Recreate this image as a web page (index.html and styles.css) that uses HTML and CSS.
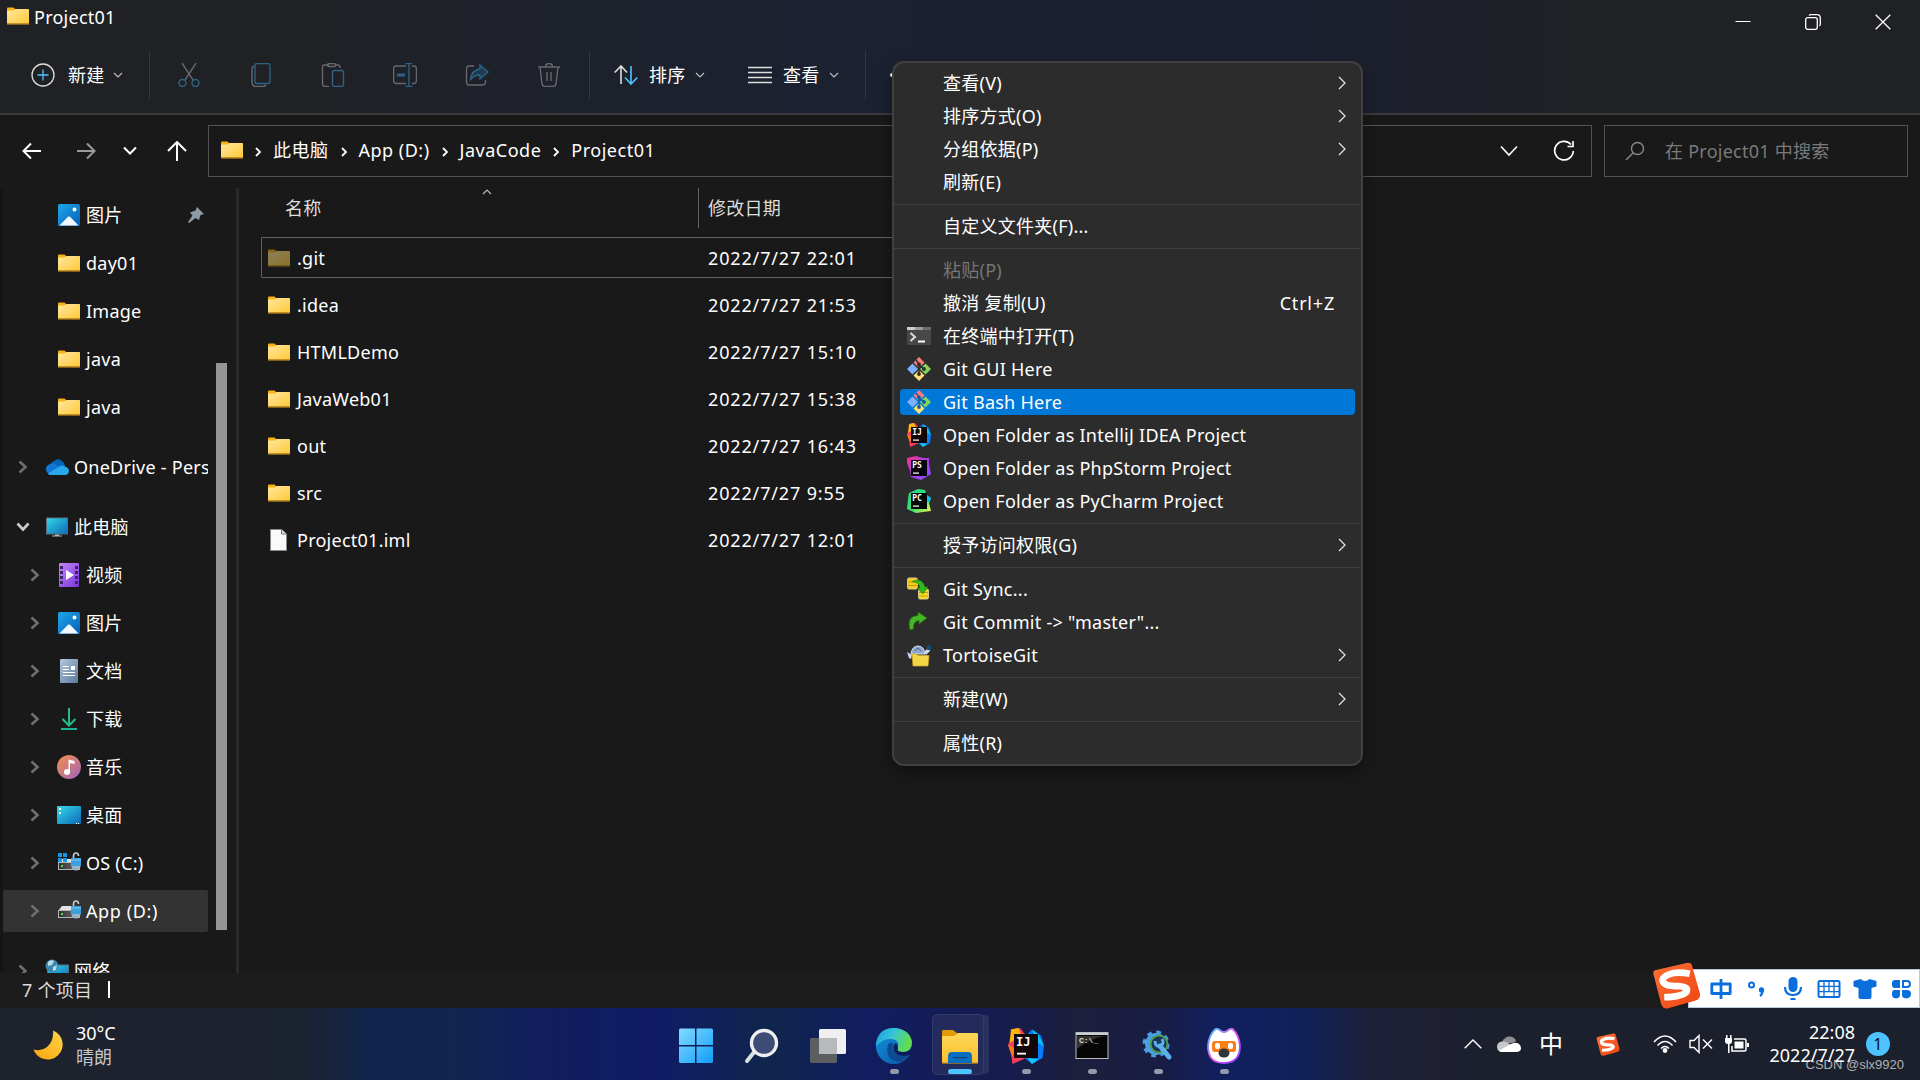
FILE: index.html
```html
<!DOCTYPE html>
<html lang="zh-CN">
<head>
  <meta charset="UTF-8">
  <meta name="viewport" content="width=device-width, initial-scale=1.0">
  <title>Project01</title>
  <link rel="stylesheet" href="styles.css">
</head>
<body>

<!-- shared icons -->
<svg class="defs" width="0" height="0">
  <defs>
    <linearGradient id="gFolder" x1="0" y1="0" x2="1" y2="1"><stop offset="0" stop-color="#ffe8a0"/><stop offset="1" stop-color="#ffc937"/></linearGradient>
    <linearGradient id="gBlue" x1="0" y1="0" x2="1" y2="1"><stop offset="0" stop-color="#1fa7ea"/><stop offset="1" stop-color="#0560b5"/></linearGradient>
    <linearGradient id="gCyan" x1="0" y1="0" x2="1" y2="1"><stop offset="0" stop-color="#35d9e8"/><stop offset="1" stop-color="#0c67b8"/></linearGradient>
    <linearGradient id="gViolet" x1="0" y1="0" x2="1" y2="1"><stop offset="0" stop-color="#c487fa"/><stop offset="1" stop-color="#7b35d8"/></linearGradient>
    <linearGradient id="gDoc" x1="0" y1="0" x2="1" y2="1"><stop offset="0" stop-color="#b5c8dc"/><stop offset="1" stop-color="#587a9e"/></linearGradient>
    <linearGradient id="gMusic" x1="0" y1="0" x2="1" y2="1"><stop offset="0" stop-color="#f99048"/><stop offset="1" stop-color="#9d62c0"/></linearGradient>
    <linearGradient id="gDrive" x1="0" y1="0" x2="1" y2="0"><stop offset="0" stop-color="#2e2e2e"/><stop offset="1" stop-color="#777"/></linearGradient>
    <linearGradient id="gWin" x1="0" y1="0" x2="1" y2="1"><stop offset="0" stop-color="#82dcff"/><stop offset="1" stop-color="#129cf8"/></linearGradient>
    <linearGradient id="gEdge" x1="0" y1="0" x2="1" y2="0.3"><stop offset="0" stop-color="#1b9de0"/><stop offset="0.5" stop-color="#36c4d8"/><stop offset="1" stop-color="#62dc50"/></linearGradient>
    <linearGradient id="gEdge2" x1="0" y1="0" x2="1" y2="1"><stop offset="0" stop-color="#1492dc"/><stop offset="1" stop-color="#0a57a8"/></linearGradient>
    <linearGradient id="gTask" x1="0" y1="0" x2="0" y2="1"><stop offset="0" stop-color="#ffd75a"/><stop offset="1" stop-color="#fdbf2d"/></linearGradient>
    <linearGradient id="gMoon" x1="1" y1="0" x2="0" y2="1"><stop offset="0" stop-color="#ffd54a"/><stop offset="1" stop-color="#fba30a"/></linearGradient>
    <linearGradient id="gSogou" x1="0" y1="0" x2="1" y2="1"><stop offset="0" stop-color="#ff7038"/><stop offset="1" stop-color="#ee4410"/></linearGradient>
    <linearGradient id="gPs" x1="0" y1="0" x2="1" y2="1"><stop offset="0" stop-color="#fc3181"/><stop offset="0.5" stop-color="#a83df0"/><stop offset="1" stop-color="#8350ff"/></linearGradient>
    <linearGradient id="gPc" x1="0" y1="0" x2="1" y2="1"><stop offset="0" stop-color="#21d789"/><stop offset="0.55" stop-color="#3be070"/><stop offset="1" stop-color="#fcf84a"/></linearGradient>
    <linearGradient id="gDog" x1="0" y1="0" x2="1" y2="1"><stop offset="0" stop-color="#39c8ff"/><stop offset="0.5" stop-color="#f050e8"/><stop offset="1" stop-color="#7a40ff"/></linearGradient>
  </defs>

  <symbol id="folder" viewBox="0 0 22 18">
    <path d="M0 1.5Q0 0.5 1 0.5H6.5L8.5 2.5V5H0Z" fill="#fbb114"/>
    <path d="M0 3.6H6.8L8.5 2H21.4Q22 2 22 2.8V16.6H0Z" fill="url(#gFolder)"/>
    <path d="M0 16.4H22V17.5H0Z" fill="#e9a31c"/>
  </symbol>
  <symbol id="picture" viewBox="0 0 24 24">
    <rect x="1" y="1" width="22" height="22" rx="1.5" fill="url(#gBlue)"/>
    <path d="M2.5 22.5L11 13.8Q12 13 13 13.8L21.5 22.5Z" fill="#f4f9ff"/>
    <circle cx="17.5" cy="6.5" r="2" fill="#fff"/>
  </symbol>
  <symbol id="cloud" viewBox="0 0 24 24">
    <path d="M4 12Q6 7 9 6Q13 2.500 17 6Q20 8 20 12Z" fill="#0364b8"/>
    <path d="M5 19A5 5 0 0 1 4 9.500Q8 7 12 10.500L17 13L10 19Z" fill="#0f78d4"/>
    <path d="M3 18.500L14 12Q17 9.500 20 11.500Q24 13 24 16Q23.500 20 20 20H5Q3.500 20 3 18.500Z" fill="#28a8ea"/>
  </symbol>
  <symbol id="monitor" viewBox="0 0 24 24">
    <rect x="1.500" y="3" width="21" height="16" fill="url(#gCyan)" stroke="#55707c"/>
    <path d="M10 19.500H14V20.500H17V21.500H7V20.500H10Z" fill="#aeb9c0"/>
  </symbol>
  <symbol id="video" viewBox="0 0 24 24">
    <rect x="2" y="0" width="20" height="24" rx="1" fill="url(#gViolet)"/>
    <path d="M3 3h3v3H3zM3 8h3v3H3zM3 13h3v3H3zM3 18h3v3H3zM18 3h3v3h-3zM18 8h3v3h-3zM18 13h3v3h-3zM18 18h3v3h-3z" fill="#3c2468"/>
    <path d="M9 7L17 12L9 17Z" fill="#fff"/>
  </symbol>
  <symbol id="doc" viewBox="0 0 24 24">
    <rect x="3" y="0" width="18" height="24" rx="1" fill="url(#gDoc)"/>
    <path d="M6 7.500H12M6 10.500H12M6 13.500H18M6 16.500H18" stroke="#fff"/>
    <rect x="14" y="7" width="4" height="4" fill="#fff"/>
  </symbol>
  <symbol id="download" viewBox="0 0 24 24">
    <path d="M12 1V18M5.500 12L12 18.500L18.500 12" stroke="#25bf86" stroke-width="2" fill="none"/>
    <path d="M4 21H20V23H4Z" fill="#17b394"/>
  </symbol>
  <symbol id="music" viewBox="0 0 24 24">
    <circle cx="12" cy="12" r="12" fill="url(#gMusic)"/>
    <circle cx="10" cy="17" r="3" fill="#fff"/>
    <path d="M11.500 17V4.500L17.500 6V9L13 8V17Z" fill="#fff"/>
  </symbol>
  <symbol id="desktop" viewBox="0 0 24 24">
    <rect x="0" y="3" width="24" height="18" rx="1" fill="url(#gCyan)"/>
    <path d="M2 5h2v2H2zM2 9h2v2H2zM19 20h1v1h-1zM21 20h1v1h-1z" fill="#fff"/>
  </symbol>
  <symbol id="lock" viewBox="0 0 24 24">
    <path d="M16.500 8V5Q16.500 2 19 2Q21.500 2 21.500 5" stroke="#bfc8cf" stroke-width="1.700" fill="none"/>
    <circle cx="19" cy="15" r="4.500" fill="#9db4c4"/>
    <rect x="14" y="7" width="10" height="8" fill="#3ca0e0"/>
    <path d="M14 9H24" stroke="#7cc8f4"/>
  </symbol>
  <symbol id="drive" viewBox="0 0 24 24">
    <path d="M5 7H19L23 12H1Z" fill="#e3e3e3"/>
    <rect x="1.500" y="11.500" width="21" height="7" fill="url(#gDrive)" stroke="#b5b5b5"/>
    <rect x="4" y="14" width="2" height="2" fill="#3be63b"/>
    <use href="#lock"/>
  </symbol>
  <symbol id="osdrive" viewBox="0 0 24 24">
    <path d="M5 8H19L23 12H1Z" fill="#e3e3e3"/>
    <rect x="1.500" y="11.500" width="21" height="7" fill="url(#gDrive)" stroke="#b5b5b5"/>
    <path d="M1 2h4v4H1zM6 2h4v4H6zM1 7h4v4H1zM6 7h4v4H6z" fill="#1597e8"/>
    <rect x="4" y="14" width="2" height="2" fill="#3be63b"/>
    <use href="#lock"/>
  </symbol>
  <symbol id="network" viewBox="0 0 24 24">
    <rect x="2.500" y="6" width="21" height="14" fill="url(#gCyan)" stroke="#55707c"/>
    <circle cx="7" cy="7" r="6.500" fill="#3d86ae"/>
    <path d="M3 3Q6 0 9 2L7 6L3 7ZM8 8L12 6L11 11L8 12Z" fill="#b8dcec"/>
  </symbol>
  <symbol id="file" viewBox="0 0 24 24">
    <path d="M3.500 1.500H14.500L19.500 6V22.500H3.500Z" fill="#fafafa" stroke="#8a8a8a"/>
    <path d="M14.500 1.500V6H19.500" fill="#ddd" stroke="#777"/>
  </symbol>
  <symbol id="chev" viewBox="0 0 12 14"><path d="M2.500 1.500L8.500 7L2.500 12.500" fill="none" stroke="currentColor" stroke-width="2.600"/></symbol>
  <symbol id="caret" viewBox="0 0 10 6"><path d="M1 1L5 5L9 1" fill="none" stroke="currentColor" stroke-width="1.200"/></symbol>
  <symbol id="sub" viewBox="0 0 8 14"><path d="M1 1L7 7L1 13" fill="none" stroke="#e8e8e8" stroke-width="1.200"/></symbol>
  <symbol id="crumb" viewBox="0 0 8 10"><path d="M2 1L6 5L2 9" fill="none" stroke="#fff" stroke-width="1.800"/></symbol>
  <symbol id="git" viewBox="0 0 24 24">
    <path d="M12 0L17.500 5.500L12 11L6.500 5.500Z" fill="#ff7b7b"/>
    <path d="M18.500 6.500L24 12L18.500 17.500L13 12Z" fill="#86d65c"/>
    <path d="M5.500 6.500L11 12L5.500 17.500L0 12Z" fill="#7fb0fb"/>
    <path d="M12 13L17.500 18.500L12 24L6.500 18.500Z" fill="#ffe173"/>
    <path d="M9 3L12 7V17M12 8L17 12" stroke="currentColor" stroke-width="1.500" fill="none"/>
    <g fill="currentColor"><circle cx="12" cy="7.500" r="1.900"/><circle cx="12" cy="17" r="1.900"/><circle cx="17" cy="12" r="1.900"/></g>
  </symbol>
  <symbol id="idea" viewBox="0 0 24 24">
    <path d="M2 1L8 0L12 5V20L3 24L2 17L0 11L2 8Z" fill="#fc3a5c"/>
    <path d="M2 1L7 0L9 5L1 10Z" fill="#fdb60d"/>
    <path d="M0 11L5 14L3 19L2 17Z" fill="#f97a12"/>
    <path d="M10 5L13 4L16 1L22 5L24 12L23 20L16 24L10 19Z" fill="#087cfa"/>
    <path d="M16 1L20 4L24 12L20 10Z" fill="#07c3f2"/>
    <path d="M13 20L20 21L16 24Z" fill="#14c9ee"/>
    <rect x="4" y="4" width="16" height="16" fill="#120608"/>
    <rect x="6" y="16.500" width="6" height="1.200" fill="#fff"/>
  </symbol>
  <symbol id="phpstorm" viewBox="0 0 24 24">
    <path d="M0 2L9 0L16 2L22 2L22 8L24 18L19 21L14 24L4 21L3 15L0 7Z" fill="url(#gPs)"/>
    <rect x="4" y="4" width="16" height="16" fill="#08030c"/>
    <rect x="6" y="16.500" width="6" height="1.200" fill="#fff"/>
  </symbol>
  <symbol id="pycharm" viewBox="0 0 24 24">
    <path d="M2 4L11 0L18 1L20 7L24 9L22 14L24 22L16 23L9 24L0 20L1 10Z" fill="url(#gPc)"/>
    <path d="M20 6L24 9L22 13L20 13Z" fill="#07c3f2"/>
    <rect x="4" y="4" width="16" height="16" fill="#030a05"/>
    <rect x="6" y="16.500" width="6" height="1.200" fill="#fff"/>
  </symbol>
  <symbol id="sogou" viewBox="0 0 48 46">
    <path d="M3 8Q1 8.500 1.200 11L9 41Q10.500 46 15 45.500L42 38Q48 36 47 31L39 3Q38 0 34 1Z" fill="url(#gSogou)"/>
    <path d="M37 11.500Q24 9 17 12Q7 16 12 21Q15 24 25 23.500Q36 24 34 29Q30 34 12 34.500" fill="none" stroke="#fff" stroke-width="6.500"/>
  </symbol>
</svg>

<div class="screen">
  <header class="ribbon">
    <div class="titlebar">
      <div class="title"><svg class="folder"><use href="#folder"/></svg><span>Project01</span></div>
      <div class="winbtns">
        <svg width="16" height="16" viewBox="0 0 16 16"><path d="M0.500 7.500H15.500" stroke="#fff"/></svg>
        <svg width="16" height="16" viewBox="0 0 16 16" fill="none" stroke="#fff" stroke-width="1.300"><rect x="0.700" y="3.700" width="11.600" height="11.600" rx="2"/><path d="M4 1.500Q4.500 0.700 6 0.700H12Q15.300 0.700 15.300 4V10Q15.300 11.500 14.300 12"/></svg>
        <svg width="16" height="16" viewBox="0 0 16 16"><path d="M0.700 0.700L15.300 15.300M15.300 0.700L0.700 15.300" stroke="#fff" stroke-width="1.300"/></svg>
      </div>
    </div>
    <div class="commands">
      <div class="cmd new">
        <svg width="24" height="24" viewBox="0 0 24 24" fill="none"><circle cx="12" cy="12" r="11" stroke="#ddd" stroke-width="1.300"/><path d="M12 6.500V17.500M6.500 12H17.500" stroke="#4cc2ff" stroke-width="1.300"/></svg>
        <span>新建</span><svg class="caret"><use href="#caret"/></svg>
      </div>
      <i class="vsep"></i>
      <div class="tools">
        <svg viewBox="0 0 24 24"><path class="g" d="M5 0L16 17M19 0L8 17"/><circle class="b" cx="5.500" cy="20" r="3.500"/><circle class="b" cx="18.500" cy="20" r="3.500"/></svg>
        <svg viewBox="0 0 24 24"><path class="g" d="M5 3Q3 4 3 6V19Q3 23.500 7 23.500H14Q16 23.500 17 22"/><rect class="b" x="6" y="0.500" width="15" height="20" rx="2"/></svg>
        <svg viewBox="0 0 24 24"><path class="g" d="M8 2H3Q1.500 2 1.500 4V21Q1.500 23.500 4 23.500H8M14 2H17Q19 2 19 5"/><rect class="g" x="6.500" y="0.500" width="8" height="3" rx="1.500"/><rect class="b" x="11.500" y="7.500" width="11" height="16" rx="2"/></svg>
        <svg viewBox="0 0 24 24"><path class="g" d="M13 3H3Q0.600 3 0.600 6V17Q0.600 20.500 3 20.500H13M19 3H21Q23.500 3 23.500 6V17Q23.500 20.500 21 20.500H19"/><path class="b" d="M16 0.500V23.500M12.500 0.500H19.500M12.500 23.500H19.500"/><path class="b thick" d="M4 12H12"/></svg>
        <svg viewBox="0 0 24 24"><path class="g" d="M9 3H4Q1.500 3 1.500 6V19Q1.500 22 4 22H17Q20.500 22 20.500 19V17"/><path class="b fill" d="M15 2L23 9L15 16V12Q9 12 5.500 16.500Q6.500 7 15 6Z"/></svg>
        <svg viewBox="0 0 24 24"><path class="g" d="M1 4H23M3 4L5 21Q5.500 23.500 8 23.500H16Q18.500 23.500 19 21L21 4M8.500 4Q8.500 0.500 12 0.500Q15.500 0.500 15.500 4M10 9V18M14 9V18"/></svg>
      </div>
      <i class="vsep"></i>
      <div class="cmd sort">
        <svg width="24" height="24" viewBox="0 0 24 24" fill="none" stroke-width="1.600"><path d="M7 21V3M0.700 9.500L7 3L13 9.500" stroke="#ddd"/><path d="M17 3V21M11 14.500L17 21L23.300 14.500" stroke="#4cc2ff"/></svg>
        <span>排序</span><svg class="caret"><use href="#caret"/></svg>
      </div>
      <div class="cmd view">
        <svg width="24" height="24" viewBox="0 0 24 24"><path d="M0 4.500H24M0 9.500H24M0 14.500H24M0 19.500H24" stroke="#ddd" stroke-width="1.400"/></svg>
        <span>查看</span><svg class="caret"><use href="#caret"/></svg>
      </div>
      <i class="vsep"></i>
      <span class="more"></span>
    </div>
  </header>

  <div class="addressbar">
    <div class="navbtns">
      <svg width="20" height="20" viewBox="0 0 20 20"><path d="M19 10H2M9 2.500L1.500 10L9 17.500"/></svg>
      <svg class="dim" width="20" height="20" viewBox="0 0 20 20"><path d="M1 10H18M11 2.500L18.500 10L11 17.500"/></svg>
      <svg width="14" height="20" viewBox="0 0 14 20"><path d="M1 6.500L7 12.500L13 6.500"/></svg>
      <svg width="20" height="20" viewBox="0 0 20 20"><path d="M10 20V1M1 10L10 1L19 10"/></svg>
    </div>
    <div class="path">
      <svg class="folder"><use href="#folder"/></svg>
      <svg class="crumb"><use href="#crumb"/></svg><span>此电脑</span>
      <svg class="crumb"><use href="#crumb"/></svg><span>App (D:)</span>
      <svg class="crumb"><use href="#crumb"/></svg><span>JavaCode</span>
      <svg class="crumb"><use href="#crumb"/></svg><span>Project01</span>
      <svg class="drop" width="18" height="12" viewBox="0 0 18 12"><path d="M1 1.500L9 10L17 1.500" fill="none" stroke="#fff" stroke-width="1.600"/></svg>
      <svg width="22" height="22" viewBox="0 0 22 22"><path d="M18 4.500A9.300 9.300 0 1 0 20.300 11M20 1V6.500H14.500" fill="none" stroke="#fff" stroke-width="1.700"/></svg>
    </div>
    <div class="search">
      <svg width="20" height="20" viewBox="0 0 20 20"><path d="M1 19L8 12" fill="none" stroke="#888" stroke-width="1.400"/><circle cx="12.500" cy="7.500" r="6" fill="none" stroke="#888" stroke-width="1.400"/></svg>
      <span>在 Project01 中搜索</span>
    </div>
  </div>

  <main>
    <nav>
      <div class="tree">
        <div class="node child"><b></b><svg class="ico"><use href="#picture"/></svg><span>图片</span>
          <svg class="pin" width="18" height="18" viewBox="0 0 18 18"><path d="M10 1L17 8L13.500 9L12 14L8.500 12L2 17L1 16L5.500 9.500L3 6.500L8.500 4.500Z" fill="#8f9aa3"/></svg></div>
        <div class="node child"><b></b><svg class="ico f"><use href="#folder"/></svg><span>day01</span></div>
        <div class="node child"><b></b><svg class="ico f"><use href="#folder"/></svg><span>Image</span></div>
        <div class="node child"><b></b><svg class="ico f"><use href="#folder"/></svg><span>java</span></div>
        <div class="node child"><b></b><svg class="ico f"><use href="#folder"/></svg><span>java</span></div>
        <div class="node group"><svg class="chev"><use href="#chev"/></svg><svg class="ico"><use href="#cloud"/></svg><span>OneDrive - Pers</span></div>
        <div class="node group"><svg class="chev open"><use href="#chev"/></svg><svg class="ico"><use href="#monitor"/></svg><span>此电脑</span></div>
        <div class="node child"><svg class="chev"><use href="#chev"/></svg><svg class="ico"><use href="#video"/></svg><span>视频</span></div>
        <div class="node child"><svg class="chev"><use href="#chev"/></svg><svg class="ico"><use href="#picture"/></svg><span>图片</span></div>
        <div class="node child"><svg class="chev"><use href="#chev"/></svg><svg class="ico"><use href="#doc"/></svg><span>文档</span></div>
        <div class="node child"><svg class="chev"><use href="#chev"/></svg><svg class="ico"><use href="#download"/></svg><span>下载</span></div>
        <div class="node child"><svg class="chev"><use href="#chev"/></svg><svg class="ico"><use href="#music"/></svg><span>音乐</span></div>
        <div class="node child"><svg class="chev"><use href="#chev"/></svg><svg class="ico"><use href="#desktop"/></svg><span>桌面</span></div>
        <div class="node child"><svg class="chev"><use href="#chev"/></svg><svg class="ico"><use href="#osdrive"/></svg><span>OS (C:)</span></div>
        <div class="node child selected"><svg class="chev"><use href="#chev"/></svg><svg class="ico"><use href="#drive"/></svg><span>App (D:)</span></div>
        <div class="node group"><svg class="chev"><use href="#chev"/></svg><svg class="ico"><use href="#network"/></svg><span>网络</span></div>
      </div>
      <div class="scroll"><div class="thumb"></div></div>
    </nav>

    <section class="files">
      <div class="head">
        <div class="colname">名称<svg class="caret up"><use href="#caret"/></svg></div>
        <div class="coldate">修改日期</div>
      </div>
      <div class="file focus"><svg class="folder faded"><use href="#folder"/></svg><span class="name">.git</span><span class="date">2022/7/27 22:01</span></div>
      <div class="file"><svg class="folder"><use href="#folder"/></svg><span class="name">.idea</span><span class="date">2022/7/27 21:53</span></div>
      <div class="file"><svg class="folder"><use href="#folder"/></svg><span class="name">HTMLDemo</span><span class="date">2022/7/27 15:10</span></div>
      <div class="file"><svg class="folder"><use href="#folder"/></svg><span class="name">JavaWeb01</span><span class="date">2022/7/27 15:38</span></div>
      <div class="file"><svg class="folder"><use href="#folder"/></svg><span class="name">out</span><span class="date">2022/7/27 16:43</span></div>
      <div class="file"><svg class="folder"><use href="#folder"/></svg><span class="name">src</span><span class="date">2022/7/27 9:55</span></div>
      <div class="file"><svg class="page"><use href="#file"/></svg><span class="name">Project01.iml</span><span class="date">2022/7/27 12:01</span></div>
    </section>
  </main>

  <div class="status"><span>7 个项目</span><i></i></div>

  <footer class="taskbar">
    <div class="weather">
      <svg width="30" height="30" viewBox="0 0 30 30"><path d="M20 0.500A15 15 0 1 1 0.500 19.500Q8 22 14 17Q21 11 20 0.500Z" fill="url(#gMoon)"/></svg>
      <div><p>30°C</p><p class="sky">晴朗</p></div>
    </div>
    <div class="apps">
      <div class="app"><svg width="36" height="36" viewBox="0 0 36 36"><path d="M1 2Q1 0.500 2.500 0.500H17V17H1ZM18.500 0.500H33.500Q35 0.500 35 2V17H18.500ZM1 18.500H17V35H2.500Q1 35 1 33.500ZM18.500 18.500H35V33.500Q35 35 33.500 35H18.500Z" fill="url(#gWin)"/></svg></div>
      <div class="app"><svg width="36" height="36" viewBox="0 0 36 36"><path d="M3 33L11 23" stroke="#dcdfe2" stroke-width="4" stroke-linecap="round"/><circle cx="20" cy="15" r="12.500" fill="#3d4c76" stroke="#eceef0" stroke-width="3.400"/></svg></div>
      <div class="app"><svg width="36" height="36" viewBox="0 0 36 36"><rect x="0" y="10" width="27" height="25" rx="1.500" fill="#5c5e62"/><rect x="9" y="1" width="27" height="25" rx="1.500" fill="#f0f0f2"/><rect x="9" y="10" width="18" height="16" fill="#b8b9bb"/></svg></div>
      <div class="app run"><svg width="36" height="36" viewBox="0 0 36 36">
        <circle cx="18" cy="18" r="18" fill="url(#gEdge2)"/>
        <path d="M0 16Q2 0 18 0Q34 1 36 14Q36 24 27 24Q20 24 22 20Q24 12 16 11Q6 10 0 19Z" fill="url(#gEdge)"/>
        <path d="M12 17Q8 33 25 34Q31 31 34 26Q26 30 20 26Q15 22 17 15Q13 14 12 17Z" fill="#0d4a92"/>
        <path d="M22 20Q20 24 27 24Q34 24 36 18V26L33 27Q22 30 18 23Q16 17 20 15Q22 17 22 20Z" fill="#101d5c"/></svg></div>
      <div class="app run active"><svg width="36" height="36" viewBox="0 0 36 36">
        <path d="M0 2Q0 1 1.500 1H11L15 4V9H0Z" fill="#e09a08"/><path d="M0 7H12L16 4H35Q36 4 36 5.500V34H0Z" fill="url(#gTask)"/><path d="M0 33H36V34.500H0Z" fill="#e5a614"/>
        <path d="M6 34V27Q6 23 10 23H26Q30 23 30 27V34Z" fill="#0b6dc0"/><path d="M11 28.500H25" stroke="#074a8a" stroke-width="1.500"/></svg></div>
      <div class="app run"><svg width="36" height="36" viewBox="0 0 24 24"><use href="#idea"/><text x="5.300" y="12" class="jbtext">IJ</text></svg></div>
      <div class="app run"><svg width="36" height="36" viewBox="0 0 36 36"><rect x="2" y="4.500" width="32" height="26" fill="#060606" stroke="#b9bdc0"/><path d="M2 5H34V7H2Z" fill="#c9ced2"/><path d="M3 8H32Q16 10 3 21Z" fill="#333"/><text x="5" y="15" class="dos">C:\_</text></svg></div>
      <div class="app run"><svg width="36" height="36" viewBox="0 0 36 36"><circle cx="16" cy="16" r="8.500" fill="none" stroke="#4a9ee2" stroke-width="5"/><circle cx="16" cy="16" r="11.500" fill="none" stroke="#4a9ee2" stroke-width="4" stroke-dasharray="4.500 4.530"/><circle cx="19" cy="16" r="8.500" fill="#1b3358" stroke="#4f9b52" stroke-width="2"/><path d="M20 18L29 29" stroke="#5cb0ee" stroke-width="5" fill="none" stroke-linecap="round"/><path d="M15 13Q15 19 20 18Q25 16 22 11" stroke="#5cb0ee" stroke-width="3" fill="none"/></svg></div>
      <div class="app run"><svg width="36" height="36" viewBox="0 0 36 36"><path d="M9 1.500Q11 -0.500 15 3Q18 5 21 3Q25 -0.500 27 1.500Q33 7 34 18Q34 35 18 35Q2 35 2 18Q3 7 9 1.500Z" fill="#fff" stroke="url(#gDog)" stroke-width="1.800"/><rect x="6" y="13" width="24" height="11" rx="3" fill="#f98016"/><rect x="9" y="15" width="5" height="6" rx="2" fill="#fff"/><rect x="22" y="15" width="5" height="6" rx="2" fill="#fff"/><ellipse cx="18" cy="25" rx="5.500" ry="4.500" fill="#30343c"/></svg></div>
    </div>
    <div class="tray">
      <svg class="t-up" width="18" height="10" viewBox="0 0 18 10"><path d="M0.700 9.300L9 1L17.300 9.300" fill="none" stroke="#fff" stroke-width="1.400"/></svg>
      <svg class="t-cloud" width="24" height="24" viewBox="0 0 24 24"><path d="M5 10Q8 4 13 4.500Q18 5 19 9Q15 13 5 10Z" fill="#8e9096"/><path d="M0 15Q0 10 5 9.500Q10 9 15 14L6 20Q0 20 0 15Z" fill="#c6c8cc"/><path d="M2 18.500L14 12Q20 9 23 13Q26 19 20 20H5Q3 20 2 18.500Z" fill="#fff"/></svg>
      <span class="t-zh">中</span>
      <svg class="t-sogou" width="24" height="23"><use href="#sogou"/></svg>
      <svg class="t-wifi" width="24" height="20" viewBox="0 0 24 20" fill="none" stroke="#fff" stroke-width="1.600"><path d="M1 8Q12 -4 23 8M4.500 11.500Q12 3.500 19.500 11.500M8 14.500Q12 10.500 16 14.500"/><circle cx="12" cy="16.500" r="1.600" fill="#fff"/></svg>
      <svg class="t-vol" width="24" height="20" viewBox="0 0 24 20" fill="none" stroke="#fff" stroke-width="1.400"><path d="M1 6.500H5L10 1.500V18.500L5 13.500H1ZM14 5.500L23 14.500M23 5.500L14 14.500"/></svg>
      <svg class="t-bat" width="24" height="20" viewBox="0 0 24 20"><path d="M9 5H19.500Q21 5 21 6.500V15.500Q21 17 19.500 17H7V12" fill="none" stroke="#fff" stroke-width="1.500"/><rect x="9.500" y="7.500" width="9" height="7" fill="#fff"/><path d="M22 9H24V13H22ZM0 4H7V7Q7 10 4.500 10V19H3V10Q0 10 0 7ZM1 1H2.500V4H1ZM5 1H6.500V4H5Z" fill="#fff"/></svg>
      <div class="clock"><p>22:08</p><p>2022/7/27</p></div>
      <span class="badge">1</span>
    </div>
  </footer>

  <div class="menu">
    <div class="item"><b></b><span>查看(V)</span><svg class="sub"><use href="#sub"/></svg></div>
    <div class="item"><b></b><span>排序方式(O)</span><svg class="sub"><use href="#sub"/></svg></div>
    <div class="item"><b></b><span>分组依据(P)</span><svg class="sub"><use href="#sub"/></svg></div>
    <div class="item"><b></b><span>刷新(E)</span></div>
    <hr>
    <div class="item"><b></b><span>自定义文件夹(F)...</span></div>
    <hr>
    <div class="item off"><b></b><span>粘贴(P)</span></div>
    <div class="item"><b></b><span>撤消 复制(U)</span><span class="key">Ctrl+Z</span></div>
    <div class="item"><svg viewBox="0 0 24 24"><rect y="3" width="24" height="18" rx="1" fill="#484848"/><path d="M0 3H8V6H0Z" fill="#ccc"/><path d="M8 3H16V6H8Z" fill="#9c9c9c"/><path d="M16 3H24V6H16Z" fill="#6c6c6c"/><path d="M3.500 9L8 13L3.500 17" fill="none" stroke="#ddd" stroke-width="2"/><path d="M11 17.500H18" stroke="#fff" stroke-width="2"/></svg><span>在终端中打开(T)</span></div>
    <div class="item"><svg class="git"><use href="#git"/></svg><span>Git GUI Here</span></div>
    <div class="item hot"><svg class="git"><use href="#git"/></svg><span>Git Bash Here</span></div>
    <div class="item"><svg viewBox="0 0 24 24"><use href="#idea"/><text x="5.300" y="12" class="jbtext">IJ</text></svg><span>Open Folder as IntelliJ IDEA Project</span></div>
    <div class="item"><svg viewBox="0 0 24 24"><use href="#phpstorm"/><text x="5.300" y="12" class="jbtext">PS</text></svg><span>Open Folder as PhpStorm Project</span></div>
    <div class="item"><svg viewBox="0 0 24 24"><use href="#pycharm"/><text x="5.300" y="12" class="jbtext">PC</text></svg><span>Open Folder as PyCharm Project</span></div>
    <hr>
    <div class="item"><b></b><span>授予访问权限(G)</span><svg class="sub"><use href="#sub"/></svg></div>
    <hr>
    <div class="item"><svg viewBox="0 0 24 24"><rect x="0.500" y="1" width="10" height="11" rx="1.500" fill="#f2cf1c" stroke="#d8c890"/><path d="M1 5H11M1 8.500H11" stroke="#c89a10"/><rect x="11.500" y="12" width="10" height="10" rx="1.500" fill="#f7dc20" stroke="#d8c890"/><path d="M12 15.500H21M12 19H21" stroke="#c89a10"/><path d="M5 4.500Q15 -0.500 18 10H21L16 17L10 11H13Q12 5 5 4.500Z" fill="#35b81c" stroke="#1c7a10" stroke-width="0.600"/></svg><span>Git Sync...</span></div>
    <div class="item"><svg viewBox="0 0 24 24"><path d="M11 2L20 8L12 14V10.500Q6 11 6.500 19L3 20Q-1 6 11 5.500Z" fill="#43b822" stroke="#1d7310" stroke-width="0.700"/></svg><span>Git Commit -&gt; "master"...</span></div>
    <div class="item"><svg viewBox="0 0 24 24"><path d="M4 11Q5 3 11 3Q17 3 18 11Z" fill="#8ea6cc" stroke="#d8e2f4"/><path d="M8 8L11 5L14 8" stroke="#4b5f88" fill="none"/><path d="M0 9L5 12L4 16L2 15ZM17 9L22 4L23 8L19 12Z" fill="#c9d8ee"/><rect x="20" y="2" width="4" height="5" rx="1" fill="#184a70"/><path d="M5 11H9L11 12.500H22L21 23H6Z" fill="#f5d548" stroke="#d9ab1c" stroke-width="0.700"/></svg><span>TortoiseGit</span><svg class="sub"><use href="#sub"/></svg></div>
    <hr>
    <div class="item"><b></b><span>新建(W)</span><svg class="sub"><use href="#sub"/></svg></div>
    <hr>
    <div class="item"><b></b><span>属性(R)</span></div>
  </div>

  <div class="ime">
    <svg class="logo"><use href="#sogou"/></svg>
    <svg viewBox="0 0 24 24"><path d="M2.800 7H21.200V16.500H2.800ZM12 2V22" fill="none" stroke="#0a6fdc" stroke-width="2.800" stroke-linejoin="round"/></svg>
    <svg viewBox="0 0 24 24"><circle cx="6.500" cy="8" r="2.500" fill="none" stroke="#0a6fdc" stroke-width="2"/><circle cx="16.500" cy="13" r="2.700" fill="#0a6fdc"/><path d="M17.500 13Q18 17 15 19" stroke="#0a6fdc" stroke-width="2.200" fill="none"/></svg>
    <svg viewBox="0 0 24 24"><rect x="7.500" y="0" width="9" height="15" rx="4.500" fill="#0a6fdc"/><path d="M4 10Q4 18 12 18Q20 18 20 10M9.500 22H14.500" fill="none" stroke="#0a6fdc" stroke-width="2.200"/></svg>
    <svg viewBox="0 0 24 24"><rect x="1.500" y="4" width="21" height="16" rx="1.500" fill="none" stroke="#0a6fdc" stroke-width="2"/><path d="M2 9.300H22M2 14.700H22M7 4V14M12 4V14M17 4V14M7 15V20M17 15V20" stroke="#0a6fdc" stroke-width="1.300"/></svg>
    <svg viewBox="0 0 24 24"><path d="M7.500 2Q12 6 16.500 2L23.500 4V9.500L18.500 11V20Q18.500 22 16.500 22H7.500Q5.500 22 5.500 20V11L0.500 9.500V4Z" fill="#0a6fdc"/></svg>
    <svg viewBox="0 0 24 24"><path d="M3 6Q3 3 6 3H11V11H6Q3 11 3 8ZM3 16Q3 13 6 13H11V18Q11 21 7 21.500Q3 21 3 18ZM13 13H18Q22 13 22 17Q22 21 17 21.500Q13 21 13 18Z" fill="#0a6fdc"/><path d="M14 4H18Q21 4 21 7Q21 10 18 10H14Z" fill="none" stroke="#0a6fdc" stroke-width="2"/></svg>
  </div>

  <div class="watermark">CSDN @slx9920</div>
</div>

</body>
</html>
```
FILE: styles.css
```css
* {
  box-sizing: border-box;
}

body {
  margin: 0;
  background: #191919;
  color: #fff;
  font-family: "Noto Sans", "Noto Sans CJK SC", sans-serif;
  font-size: 18px;
  line-height: 24px;
  letter-spacing: .25px;
}

p {
  margin: 0;
}

svg {
  display: block;
  flex: none;
}

.defs {
  position: absolute;
}

.screen {
  position: relative;
  width: 1920px;
  height: 1080px;
  overflow: hidden;
  display: flex;
  flex-direction: column;
  white-space: nowrap;
}

.folder {
  width: 22px;
  height: 18px;
}

.caret {
  width: 10px;
  height: 6px;
  color: #bbb;
}

/* title and command bar */
.ribbon {
  height: 115px;
  flex: none;
  border-bottom: 2px solid #3a3a3d;
  background: linear-gradient(to right, #202124 0, #202124 240px, #1b2130 800px, #1b2030 1300px, #202124 1620px);
}

.titlebar {
  height: 43px;
  display: flex;
  justify-content: space-between;
}

.title {
  display: flex;
  gap: 5px;
  padding: 7px 0 0 7px;
}

.title span {
  margin-top: -2px;
}

.winbtns {
  display: flex;
  gap: 54px;
  padding: 14px 29px 0 0;
}

.commands {
  height: 64px;
  display: flex;
  align-items: center;
}

.cmd {
  display: flex;
  align-items: center;
  gap: 11px;
}

.cmd .caret {
  margin-left: -2px;
}

.new {
  width: 149px;
  padding-left: 31px;
  gap: 13px;
}

.new .caret {
  margin-left: -5px;
}

.vsep {
  width: 1px;
  height: 48px;
  background: #36393f;
}

.tools {
  width: 439px;
  padding-left: 27px;
  display: flex;
  gap: 48px;
}

.tools svg {
  width: 24px;
  height: 24px;
  fill: none;
  stroke-width: 1.4;
}

.g {
  stroke: #66686c;
}

.b {
  stroke: #2d6384;
}

.fill {
  fill: #1f3b50;
}

.thick {
  stroke-width: 3;
}

.sort {
  width: 133px;
  padding-left: 24px;
}

.view {
  width: 142px;
  padding-left: 25px;
}

.more {
  width: 4px;
  height: 4px;
  margin-left: 24px;
  border-radius: 50%;
  background: #fff;
}

/* address row */
.addressbar {
  height: 73px;
  flex: none;
  display: flex;
  padding: 10px 12px 0 0;
}

.navbtns {
  width: 208px;
  height: 52px;
  padding-left: 22px;
  display: flex;
  align-items: center;
}

.navbtns svg {
  fill: none;
  stroke: #fff;
  stroke-width: 2;
}

.navbtns svg:nth-child(2) {
  margin-left: 34px;
}

.navbtns svg:nth-child(3) {
  margin-left: 27px;
}

.navbtns svg:nth-child(4) {
  margin-left: 30px;
}

.navbtns .dim {
  stroke: #9a9a9a;
}

.path {
  width: 1384px;
  height: 52px;
  border: 1px solid #535353;
  display: flex;
  align-items: center;
  padding: 0 16px 0 12px;
  letter-spacing: .5px;
}

.path span {
  margin-top: -2px;
}

.path .folder {
  margin-top: -3px;
}

.crumb {
  width: 8px;
  height: 10px;
  margin: 2px 11px 0 11px;
}

.path .drop {
  margin-left: auto;
  margin-right: 35px;
}

.search {
  width: 304px;
  height: 52px;
  margin-left: 12px;
  padding-left: 20px;
  border: 1px solid #535353;
  display: flex;
  align-items: center;
  gap: 20px;
  color: #7a7a7a;
}

/* body */
main {
  height: 785px;
  flex: none;
  display: flex;
}

nav {
  width: 239px;
  display: flex;
  border-left: 3px solid #151515;
  border-right: 3px solid #2a2a2a;
}

.tree {
  width: 205px;
  height: 785px;
  padding-top: 3px;
  overflow: hidden;
}

.node {
  height: 48px;
  display: flex;
  align-items: center;
}

.node span {
  margin-left: 5px;
}

.group {
  margin-top: 12px;
  padding-left: 14px;
}

.group .ico {
  margin-left: 16px;
}

.child {
  padding-left: 26px;
}

.child b,
.chev {
  width: 12px;
  height: 14px;
  flex: none;
}

.chev {
  color: #6f6f6f;
}

.child .ico {
  margin-left: 16px;
}

.open {
  color: #ccc;
  transform: rotate(90deg);
}

.ico {
  width: 24px;
  height: 24px;
}

.ico.f {
  height: 18px;
  padding: 0 1px;
}

.pin {
  margin-left: 64px;
}

.selected {
  height: 42px;
  margin: 3px 0 15px;
  background: #333;
  border-radius: 2px;
  letter-spacing: .6px;
}

.scroll {
  width: 28px;
  padding: 175px 0 0 8px;
}

.thumb {
  width: 11px;
  height: 567px;
  background: #959595;
}

.files {
  width: 1100px;
  padding-left: 22px;
}

.head {
  height: 49px;
  display: flex;
  color: #ddd;
}

.head .colname {
  position: relative;
  width: 438px;
  height: 40px;
  padding: 8px 0 0 24px;
  border-right: 1px solid #636363;
}

.caret.up {
  position: absolute;
  left: 221px;
  top: 1px;
  transform: rotate(180deg);
}

.coldate {
  padding: 8px 0 0 9px;
}

.file {
  height: 41px;
  margin-bottom: 6px;
  padding-left: 6px;
  border: 1px solid transparent;
  display: flex;
  align-items: center;
}

.focus {
  border-color: #636363;
  border-radius: 1px;
}

.faded {
  opacity: .5;
}

.page {
  width: 24px;
  height: 24px;
  margin-left: -1px;
  margin-right: -1px;
}

.name {
  width: 418px;
  padding-left: 7px;
}

.date {
  letter-spacing: .85px;
}

.status {
  height: 35px;
  flex: none;
  display: flex;
  align-items: center;
  gap: 16px;
  padding: 0 0 2px 22px;
  background: #1c1c1c;
  color: #ddd;
}

.status i {
  width: 2px;
  height: 17px;
  background: #fff;
}

/* taskbar */
.taskbar {
  height: 72px;
  display: flex;
  background: linear-gradient(to right, #1e222d 0, #1b222f 300px, #11264e 370px, #11264f 450px, #101e5c 540px, #0f1c66 660px, #10254c 770px, #101d60 870px, #151c50 990px, #1c1e3c 1080px, #191d44 1160px, #101f5e 1220px, #10215a 1300px, #1b1f38 1370px, #1e1f33 1430px, #1b202c 1500px, #1b202c 1920px);
}

.weather {
  width: 664px;
  display: flex;
  gap: 13px;
  padding: 13px 0 0 33px;
  letter-spacing: 0;
}

.weather svg {
  margin-top: 9px;
}

.weather .sky {
  color: #c4c6ca;
}

.apps {
  width: 594px;
  display: flex;
}

.app {
  position: relative;
  width: 66px;
  padding: 20px 0 0 14px;
}

.run::after {
  content: "";
  position: absolute;
  left: 28px;
  top: 61px;
  width: 9px;
  height: 5px;
  border-radius: 3px;
  background: #9599ab;
}

.active {
  width: 52px;
  height: 61px;
  margin: 6px 10px 0 4px;
  padding: 14px 0 0 9px;
  border-radius: 5px;
  border: 1px solid #353c6c;
  background: #232b5c;
  box-shadow: 6px 0 0 -1px #2b305c;
}

.active::after {
  left: 15px;
  top: 54px;
  width: 24px;
  background: #4cc2ff;
}

.tray {
  width: 662px;
  display: flex;
  align-items: center;
}

.t-up {
  margin-left: 206px;
}

.t-cloud {
  margin-left: 15px;
}

.t-zh {
  margin-left: 18px;
  font-size: 24px;
  width: 24px;
}

.t-sogou {
  margin-left: 33px;
}

.t-wifi {
  margin-left: 33px;
}

.t-vol {
  margin-left: 12px;
}

.t-bat {
  margin-left: 12px;
}

.clock {
  width: 106px;
  text-align: right;
  line-height: 23px;
  letter-spacing: 0;
}

.badge {
  width: 24px;
  height: 24px;
  margin-left: 11px;
  border-radius: 50%;
  background: #4cc2ff;
  color: #111;
  font-size: 16px;
  text-align: center;
}

/* context menu */
.menu {
  position: absolute;
  left: 892px;
  top: 61px;
  width: 471px;
  height: 705px;
  padding: 4px 0;
  background: #2c2c2c;
  border: 2px solid #404040;
  border-radius: 12px;
  box-shadow: 0 6px 14px rgba(0, 0, 0, .35);
}

.item {
  height: 33px;
  display: flex;
  align-items: center;
  padding: 0 15px 2px 13px;
}

.item > b,
.item > svg {
  width: 24px;
  height: 24px;
  flex: none;
}

.item span {
  margin-left: 12px;
}

.item .sub {
  width: 8px;
  height: 14px;
  margin-left: auto;
}

.item .key {
  margin-left: auto;
  margin-right: 11px;
  letter-spacing: .8px;
}

.off {
  color: #767676;
}

.hot {
  height: 26px;
  margin: 3px 6px 4px;
  padding: 0 0 0 7px;
  border-radius: 4px;
  background: #0078d7;
}

.menu hr {
  height: 1px;
  margin: 5px 0;
  border: 0;
  background: #404040;
}

.git {
  color: #2c2c2c;
}

.hot .git {
  color: #0a5fa8;
}

.jbtext {
  font: bold 8px "DejaVu Sans Mono", monospace;
  letter-spacing: 0;
  fill: #fff;
}

.dos {
  font: bold 8px "Liberation Mono", monospace;
  letter-spacing: 0;
  fill: #ddd;
}

/* input method bar */
.ime {
  position: absolute;
  right: 0;
  top: 969px;
  width: 232px;
  height: 39px;
  display: flex;
  align-items: center;
  gap: 12px;
  padding-left: 20px;
  background: #fff;
  border: 1px solid #b9c9e4;
}

.ime svg {
  width: 24px;
  height: 24px;
}

.ime .logo {
  position: absolute;
  left: -37px;
  top: -8px;
  width: 49px;
  height: 47px;
}

.watermark {
  position: absolute;
  right: 16px;
  top: 1053px;
  font-family: "Liberation Sans", Arial, sans-serif;
  font-size: 13px;
  letter-spacing: 0;
  color: rgba(255, 255, 255, .65);
}
```
